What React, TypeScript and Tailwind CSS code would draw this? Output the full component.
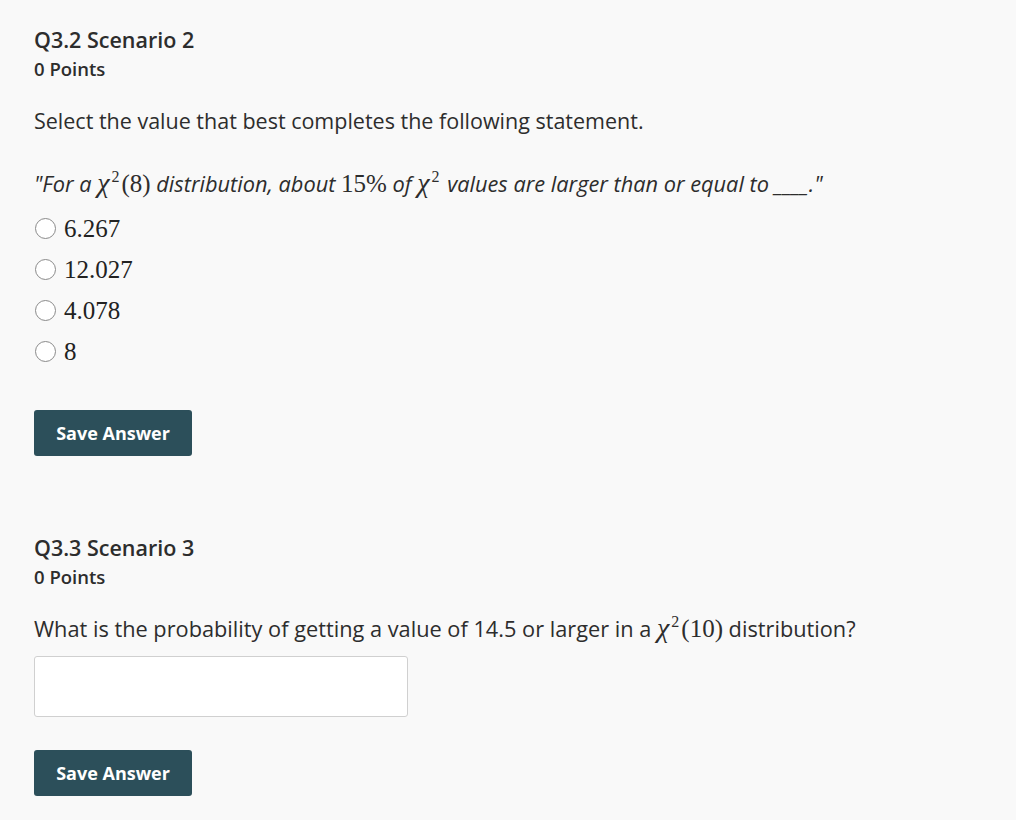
import React from 'react';

const sans = "font-['Open_Sans',sans-serif]";
const mathFont = "font-['Liberation_Serif','DejaVu_Serif',serif]";

function ChiSq() {
  return (
    <>
      <span className="italic text-[28px] leading-none">χ</span>
      <span className="text-[16px] align-[10px] leading-none ml-[2px] mr-[2px]">2</span>
    </>
  );
}

function Chi({ df }: { df: string }) {
  return (
    <span className={`${mathFont} not-italic text-[25px] whitespace-nowrap`}>
      <ChiSq />
      <span>({df})</span>
    </span>
  );
}

function SaveButton() {
  return (
    <button className="h-[46px] w-[158px] rounded-[3px] bg-[#2c4f5a] text-white text-[18px] font-bold">
      Save Answer
    </button>
  );
}

function Radio({ label }: { label: string }) {
  return (
    <label className="flex items-center h-[41px]">
      <span className="w-[21px] h-[21px] rounded-full border-[1.5px] border-[#8a8a8a] bg-white ml-[1px] mr-[8px]" />
      <span className={`${mathFont} text-[25px] text-[#222]`}>{label}</span>
    </label>
  );
}

export default function App() {
  const options = ['6.267', '12.027', '4.078', '8'];
  return (
    <div className={`${sans} min-h-[820px] bg-[#f9f9f9] text-[#2d2d2d] px-[34px] pt-[26px]`}>
      <section>
        <h2 className="text-[21.5px] font-semibold leading-[28px]">Q3.2 Scenario 2</h2>
        <p className="text-[18.5px] font-semibold leading-[24px] mt-[3px]">0 Points</p>
        <p className="text-[21.5px] leading-[30px] mt-[25px]">
          Select the value that best completes the following statement.
        </p>
        <p className="text-[21.75px] italic leading-[32px] mt-[32px]">
          "For a <Chi df="8" /> distribution, about{' '}
          <span className={`${mathFont} not-italic text-[25px]`}>15%</span> of{' '}
          <span className={`${mathFont} not-italic text-[25px]`}>
            <ChiSq />
          </span>{' '}
          values are larger than or equal to ____."
        </p>
        <div className="mt-[8px] flex flex-col">
          {options.map((o) => (
            <Radio key={o} label={o} />
          ))}
        </div>
        <div className="mt-[38px]">
          <SaveButton />
        </div>
      </section>

      <section className="mt-[78px]">
        <h2 className="text-[21.5px] font-semibold leading-[28px]">Q3.3 Scenario 3</h2>
        <p className="text-[18.5px] font-semibold leading-[24px] mt-[3px]">0 Points</p>
        <p className="text-[21.75px] leading-[32px] mt-[24px]">
          What is the probability of getting a value of 14.5 or larger in a <Chi df="10" /> distribution?
        </p>
        <input
          type="text"
          className="block mt-[11px] w-[374px] h-[61px] bg-white border border-[#d0d0d0] rounded-[3px]"
        />
        <div className="mt-[33px]">
          <SaveButton />
        </div>
      </section>
    </div>
  );
}
